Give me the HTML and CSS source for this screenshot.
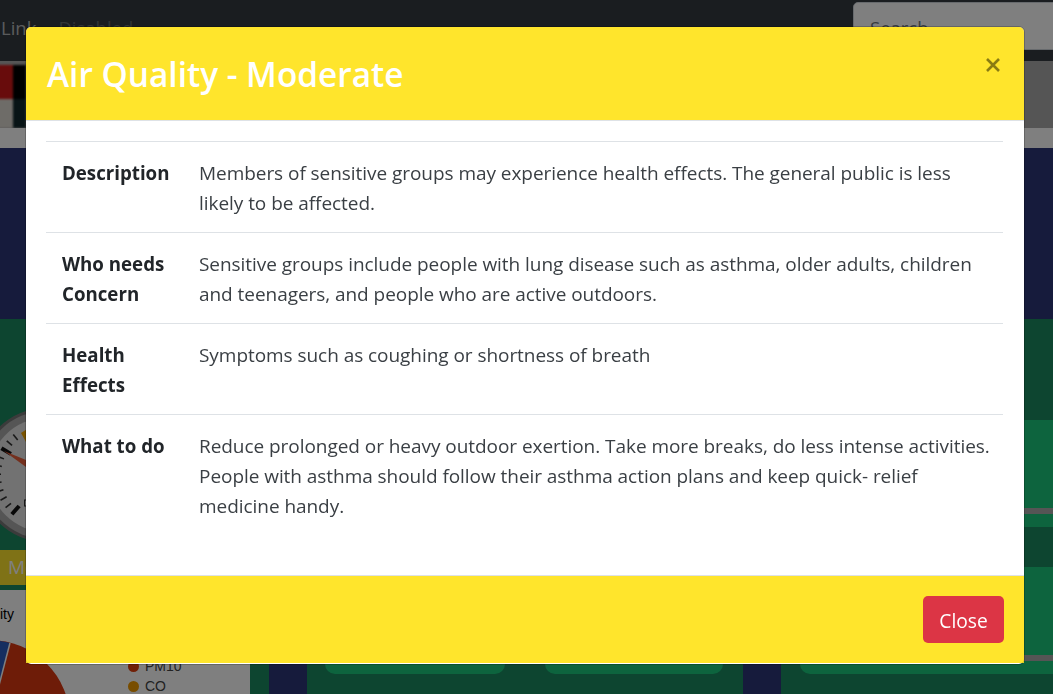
FILE: index.html
```html
<!DOCTYPE html>
<html>
<head>
    <title>Air Quality</title>
    <link rel="stylesheet" href="styles.css">
</head>
<body>
<div id="page">
    <nav class="navbar">
        <a class="nav-link" href="#">Link</a>
        <a class="nav-link nav-off" href="#">Disabled</a>
        <input class="search" type="text" placeholder="Search">
    </nav>
    <div class="hero">
        <div class="hero-photo">
            <span class="ph-red"></span><span class="ph-black"></span>
            <span class="ph-white"></span><span class="ph-teal"></span>
        </div>
    </div>
    <div class="strip"></div>
    <div class="navy"></div>
    <div class="dash">
        <div class="dash-left">
            <div class="gauge-box">
                <svg class="gauge" width="140" height="140" viewBox="0 0 140 140">
                    <circle cx="70" cy="70" r="67" fill="#777"/>
                    <circle cx="70" cy="70" r="64" fill="#aaa"/>
                    <circle cx="70" cy="70" r="57" fill="#e4e4e4"/>
                    <g stroke="#333" stroke-width="1.6">
                        <line x1="115" y1="70" x2="122" y2="70" transform="rotate(141 70 70)"/>
                        <line x1="115" y1="70" x2="122" y2="70" transform="rotate(151 70 70)"/>
                        <line x1="115" y1="70" x2="122" y2="70" transform="rotate(161 70 70)"/>
                        <line x1="115" y1="70" x2="122" y2="70" transform="rotate(171 70 70)"/>
                        <line x1="115" y1="70" x2="122" y2="70" transform="rotate(181 70 70)"/>
                        <line x1="115" y1="70" x2="122" y2="70" transform="rotate(191 70 70)"/>
                        <line x1="115" y1="70" x2="122" y2="70" transform="rotate(201 70 70)"/>
                        <line x1="115" y1="70" x2="122" y2="70" transform="rotate(221 70 70)"/>
                        <line x1="115" y1="70" x2="122" y2="70" transform="rotate(231 70 70)"/>
                    </g>
                    <g stroke="#111" stroke-width="4">
                        <line x1="111" y1="70" x2="122" y2="70" transform="rotate(131 70 70)"/>
                        <line x1="111" y1="70" x2="122" y2="70" transform="rotate(211 70 70)"/>
                    </g>
                    <path d="M28 46L72 64L72 78z" fill="#e8603c"/>
                    <path d="M45 28L56 21L60 30L50 37z" fill="#f5a800"/>
                    <rect x="48.5" y="95" width="5" height="6" fill="none" stroke="#333"/>
                </svg>
            </div>
            <div class="status-bar">Moderate</div>
            <div class="chart">
                <span class="chart-title">ity</span>
                <svg class="pie" width="160" height="160" viewBox="0 0 160 160">
                    <circle cx="80" cy="80" r="80" fill="#dc3810"/>
                    <path d="M80 80L100 3A80 80 0 0 0 40 11z" fill="#2a5cc0"/>
                    <path d="M80 80L100 3" stroke="#fff" stroke-width="1.5"/>
                </svg>
                <ul class="legend">
                    <li><i class="dot-red"></i>PM10</li>
                    <li><i class="dot-orange"></i>CO</li>
                </ul>
            </div>
        </div>
        <div class="dash-right">
            <div class="tile-strip"></div>
            <div class="tile-col col-a">
                <div class="tile"></div>
                <div class="tile"></div>
            </div>
            <div class="tile-col col-b">
                <div class="tile"></div>
                <div class="tile"></div>
            </div>
            <div class="tile-strip"></div>
            <div class="tile-col col-c">
                <div class="tile"><div class="tile-bar"></div></div>
                <div class="tile"><div class="tile-bar"></div></div>
            </div>
        </div>
    </div>
</div>

<div class="backdrop"></div>

<div class="modal">
    <div class="modal-content">
        <div class="modal-header">
            <h2>Air Quality - Moderate</h2>
            <button class="close" aria-label="Close">
                <svg width="14" height="14" viewBox="0 0 14 14"><path d="M1 1l12 12M13 1L1 13" stroke="#8a7c12" stroke-width="2.6"/></svg>
            </button>
        </div>
        <div class="modal-body">
            <table>
                <tr>
                    <th>Description</th>
                    <td>Members of sensitive groups may experience health effects. The general public is less likely to be affected.</td>
                </tr>
                <tr>
                    <th>Who needs Concern</th>
                    <td>Sensitive groups include people with lung disease such as asthma, older adults, children and teenagers, and people who are active outdoors.</td>
                </tr>
                <tr>
                    <th>Health Effects</th>
                    <td>Symptoms such as coughing or shortness of breath</td>
                </tr>
                <tr>
                    <th>What to do</th>
                    <td>Reduce prolonged or heavy outdoor exertion. Take more breaks, do less intense activities. People with asthma should follow their asthma action plans and keep quick- relief medicine handy.</td>
                </tr>
            </table>
        </div>
        <div class="modal-footer">
            <button class="btn-close">Close</button>
        </div>
    </div>
</div>
</body>
</html>
```
FILE: styles.css
```css
html, body { margin: 0; height: 100%; overflow: hidden; }
body { font-family: "Open Sans", "Noto Sans", sans-serif; font-size: 19px; line-height: 30px; color: #212529; }
#page { height: 694px; overflow: hidden; }

.navbar { height: 61px; background: #343a40; display: flex; align-items: flex-start; padding-left: 1px; box-sizing: border-box; font-size: 18.5px; }
.nav-link { margin: 13px 22px 0 0; color: rgba(255, 255, 255, 0.65); text-decoration: none; }
.nav-off { color: rgba(255, 255, 255, 0.25); }
.search { margin: 2px -20px 0 auto; width: 220px; height: 48px; box-sizing: border-box; padding: 2px 16px 0; border: 1px solid #ced4da; border-radius: 5px; background: #fff; font: inherit; }
.search::placeholder { color: #6c757d; }

.hero { height: 67px; background: #aaa; overflow: hidden; }
.hero-photo { width: 29px; height: 63px; margin: 4px 0 0 -3px; display: grid; grid-template-columns: 16px 13px; grid-template-rows: 34px 29px; background: #000; filter: blur(1px); }
.ph-red { background: #d01818; }
.ph-black { background: #000; }
.ph-white { background: #ddd8d0; }
.ph-teal { background: #10282c; }
.strip { height: 20px; background: #fff; }
.navy { height: 171px; background: #2c3678; }

.dash { height: 375px; display: flex; background: #1a8a60; }
.dash-left { width: 250px; flex: none; display: flex; flex-direction: column; }
.gauge-box { height: 231px; position: relative; overflow: hidden; }
.gauge { position: absolute; left: -24px; top: 86px; }
.status-bar { height: 35px; background: #ffe52c; color: #fff; padding-left: 8px; line-height: 35px; }
.chart { flex: 1; margin-top: 5px; background: #fff; position: relative; overflow: hidden; font-family: "Liberation Sans", sans-serif; font-size: 14px; line-height: 20px; }
.chart-title { position: absolute; left: 0; top: 14px; color: #000; }
.pie { position: absolute; left: -90px; top: 50px; }
.legend { position: absolute; left: 128px; top: 66px; margin: 0; padding: 0; list-style: none; color: #444; }
.legend li { display: flex; align-items: center; gap: 6px; height: 20px; }
.legend i { width: 11px; height: 11px; border-radius: 50%; }
.dot-red { background: #e0400f; }
.dot-orange { background: #f09a00; }

.dash-right { flex: 1; display: flex; padding-left: 19px; overflow: hidden; }
.tile-strip { width: 38px; flex: none; background: #2c3678; }
.tile-col { flex: none; display: flex; flex-direction: column; gap: 40px; padding-top: 101px; }
.col-a { width: 180px; margin: 0 40px 0 18px; }
.col-b { width: 178px; margin-right: 20px; }
.col-c { width: 300px; margin-left: 19px; }
.tile { height: 107px; background: #1ac87c; border-radius: 10px; padding-top: 88px; box-sizing: border-box; }
.tile-bar { height: 6px; background: #aaa; }

.backdrop { position: fixed; inset: 0; background: rgba(0, 0, 0, 0.5); }
.modal { position: fixed; inset: 0; padding: 27px 29px 0 26px; }
.modal-content { background: #fff; border-radius: 5px; padding-bottom: 1px; outline: 1px solid rgba(0, 0, 0, 0.2); }
.modal-header { height: 93px; background: #ffe52c; border-radius: 5px 5px 0 0; border-bottom: 1px solid #dee2e6; display: flex; justify-content: space-between; padding: 0 24px 0 21px; }
.modal-header h2 { margin: 0; padding-top: 23px; font-size: 33.4px; line-height: 48px; font-weight: 600; color: #fff; }
.close { border: 0; background: none; padding: 0; height: 14px; margin-top: 31px; line-height: 0; }
.modal-body { padding: 20px 21px 40px 20px; }
table { width: 100%; border-collapse: collapse; table-layout: fixed; }
tr { border-top: 1px solid #dee2e6; }
th, td { padding: 16px 16px 14px; vertical-align: top; text-align: left; }
th { width: 106px; font-weight: 700; font-size: 18.7px; }
td { padding: 16px 8px 14px 15px; color: #3a3f44; letter-spacing: -0.05px; }
.modal-footer { background: #ffe52c; border-top: 1px solid #dee2e6; padding: 20px; display: flex; justify-content: flex-end; }
.btn-close { width: 81px; height: 47px; border: 0; border-radius: 5px; padding: 2px 0 0; background: #dc3545; color: #fff; font: inherit; font-size: 19.2px; }
```
